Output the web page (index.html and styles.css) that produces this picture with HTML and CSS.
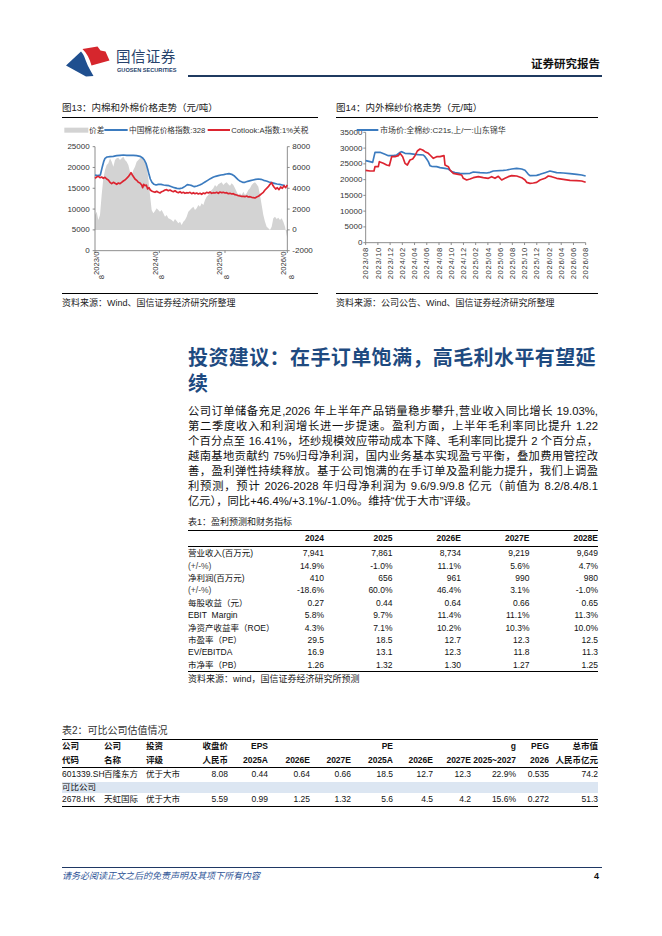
FILE: index.html
```html
<!DOCTYPE html>
<html lang="zh-CN">
<head>
<meta charset="utf-8">
<title>证券研究报告</title>
<link rel="stylesheet" href="styles.css">
</head>
<body>
<div class="page">
  <header class="hdr">
    <div class="logo">
      <svg class="logo-mark" width="48" height="31" viewBox="64 46 48 31">
        <path fill="#1f4f8f" d="M66,65.5 L81,51.5 C84.5,55 85.5,61 88,66 C89.8,69.5 91.5,72.5 93.5,76 L86,76.5 Z"/>
        <path fill="#d6262d" d="M82.5,49 L97.5,46.5 L100.5,50.5 L105.5,51.5 L109.5,60.5 L91.5,65.5 C89.5,58.5 87,53.5 82.5,49 Z"/>
      </svg>
      <div class="logo-text">
        <div class="logo-cn">国信证券</div>
        <div class="logo-en">GUOSEN SECURITIES</div>
      </div>
    </div>
    <div class="hdr-right"><span class="hdr-title">证券研究报告</span></div>
  </header>

  <div class="figs">
    <figure class="fig fig-a">
      <div class="fig-cap">图13：内棉和外棉价格走势（元/吨）</div>
      <svg class="chart" width="256" height="175" viewBox="21 69 768 525">
        <polygon class="area" points="120,405 120,360 125,350 130,375 135,360 140,300 145,250 150,225 155,210 160,205 165,190 170,200 175,215 180,195 185,190 190,188 195,195 200,190 205,185 210,195 215,200 220,210 225,230 230,240 235,225 240,215 245,200 250,195 255,190 260,188 265,192 270,200 275,215 280,250 285,300 290,345 295,355 300,348 305,340 310,345 315,350 320,345 325,355 330,365 335,360 340,370 345,372 350,375 355,380 360,372 365,378 370,385 375,380 380,390 385,380 390,375 395,365 400,350 405,345 410,340 415,335 420,345 425,340 430,330 435,335 440,325 445,330 450,315 455,305 460,300 465,290 470,285 475,280 480,270 485,275 490,268 495,265 500,262 505,270 510,265 515,262 520,268 525,272 530,265 535,270 540,280 545,290 550,300 555,295 560,300 565,290 570,300 575,295 580,285 585,280 590,270 595,265 600,262 605,268 610,275 615,300 620,330 625,360 630,380 635,395 640,400 645,405 650,395 655,370 660,365 665,372 670,368 675,375 680,370 685,380 690,395 695,420 697,430 697,405"/>
        <g class="axis">
          <line x1="120" y1="155" x2="120" y2="467"/>
          <line x1="697" y1="155" x2="697" y2="467"/>
          <line x1="120" y1="467" x2="697" y2="467"/>
          <line x1="113" y1="155" x2="120" y2="155"/><line x1="113" y1="217.4" x2="120" y2="217.4"/><line x1="113" y1="279.8" x2="120" y2="279.8"/><line x1="113" y1="342.2" x2="120" y2="342.2"/><line x1="113" y1="404.6" x2="120" y2="404.6"/><line x1="113" y1="467" x2="120" y2="467"/>
          <line x1="697" y1="155" x2="704" y2="155"/><line x1="697" y1="217.4" x2="704" y2="217.4"/><line x1="697" y1="279.8" x2="704" y2="279.8"/><line x1="697" y1="342.2" x2="704" y2="342.2"/><line x1="697" y1="404.6" x2="704" y2="404.6"/><line x1="697" y1="467" x2="704" y2="467"/>
          <line x1="120" y1="467" x2="120" y2="474"/><line x1="313" y1="467" x2="313" y2="474"/><line x1="510" y1="467" x2="510" y2="474"/><line x1="697" y1="467" x2="697" y2="474"/>
        </g>
        <polyline class="ln-blue" points="120,240 128,242 136,240 142,215 146,200 150,190 156,186 165,185 175,184 185,182 195,181 205,180 215,181 225,181 235,181 245,182 255,184 262,188 268,195 273,205 278,222 282,238 286,252 291,262 297,268 303,270 310,268 318,268 326,270 334,271 342,272 350,275 358,278 366,280 374,281 382,279 390,274 397,269 404,270 411,272 418,275 426,273 434,270 442,266 450,261 458,256 466,251 474,247 482,244 490,242 498,240 506,239 514,237 522,236 530,238 537,242 543,248 549,254 556,259 563,262 570,262 578,259 586,257 594,255 602,253 610,252 618,253 626,256 634,258 642,261 650,263 658,265 666,267 674,268 682,270 690,272"/>
        <polyline class="ln-red" points="120,250 125,246 130,244 135,248 140,246 145,250 150,247 155,252 160,255 165,262 170,266 175,262 180,265 185,268 190,264 195,266 200,262 205,258 210,255 215,250 220,245 225,238 228,233 232,240 236,246 240,252 245,256 250,262 255,264 260,270 263,278 266,268 270,272 274,270 278,282 282,278 286,285 290,288 295,290 300,292 305,289 310,292 315,294 320,290 325,288 330,285 335,284 340,287 345,285 350,288 355,290 360,287 365,291 370,293 375,290 380,294 385,292 390,295 395,293 400,294 405,292 410,296 415,293 420,296 425,294 430,297 435,295 440,298 445,294 450,296 455,292 460,294 465,291 470,295 475,293 480,294 485,292 490,295 495,291 500,293 505,292 510,294 515,293 520,296 525,295 530,297 535,296 540,299 545,300 550,302 555,303 560,304 565,304 570,305 575,303 580,306 585,305 590,307 595,308 600,309 605,306 610,304 615,300 620,296 625,292 630,285 635,280 640,275 645,268 650,263 653,270 657,276 662,282 667,278 672,284 677,276 682,280 687,272 692,278 697,270"/>
        <g class="ylab">
          <text x="104" y="155">25000</text><text x="104" y="217.4">20000</text><text x="104" y="279.8">15000</text><text x="104" y="342.2">10000</text><text x="104" y="404.6">5000</text><text x="104" y="467">0</text>
        </g>
        <g class="ylab-r">
          <text x="712" y="155">8000</text><text x="712" y="217.4">6000</text><text x="712" y="279.8">4000</text><text x="712" y="342.2">2000</text><text x="712" y="404.6">0</text><text x="712" y="467">-2000</text>
        </g>
        <g class="xlab">
          <text transform="translate(133,540) rotate(-90)">2023/0</text><text transform="translate(148,553) rotate(-90)">8</text>
          <text transform="translate(308,540) rotate(-90)">2024/0</text><text transform="translate(326,553) rotate(-90)">8</text>
          <text transform="translate(500,540) rotate(-90)">2025/0</text><text transform="translate(523,553) rotate(-90)">8</text>
          <text transform="translate(693,540) rotate(-90)">2026/0</text><text transform="translate(718,553) rotate(-90)">8</text>
        </g>
        <g class="legend">
          <rect x="28" y="98" width="72" height="15" fill="#d3d3d3"/>
          <text x="102" y="105">价差</text>
          <line class="ln-blue" x1="148" y1="105" x2="218" y2="105"/>
          <text x="222" y="105">中国棉花价格指数:328</text>
          <line class="ln-red" x1="458" y1="105" x2="525" y2="105"/>
          <text x="529" y="105">Cotlook:A指数:1%关税</text>
        </g>
      </svg>
      <div class="fig-src">资料来源：Wind、国信证券经济研究所整理</div>
    </figure>

    <figure class="fig fig-b">
      <div class="fig-cap">图14：内外棉纱价格走势（元/吨）</div>
      <svg class="chart" width="262" height="175" viewBox="18 69 786 525">
        <g class="axis">
          <line x1="107" y1="112" x2="107" y2="443"/>
          <line x1="107" y1="443" x2="767" y2="443"/>
          <line x1="100" y1="112" x2="107" y2="112"/><line x1="100" y1="159.3" x2="107" y2="159.3"/><line x1="100" y1="206.6" x2="107" y2="206.6"/><line x1="100" y1="253.9" x2="107" y2="253.9"/><line x1="100" y1="301.1" x2="107" y2="301.1"/><line x1="100" y1="348.4" x2="107" y2="348.4"/><line x1="100" y1="395.7" x2="107" y2="395.7"/><line x1="100" y1="443" x2="107" y2="443"/>
          <line x1="107" y1="443" x2="107" y2="450"/><line x1="143.67" y1="443" x2="143.67" y2="450"/><line x1="180.33" y1="443" x2="180.33" y2="450"/><line x1="217" y1="443" x2="217" y2="450"/><line x1="253.67" y1="443" x2="253.67" y2="450"/><line x1="290.33" y1="443" x2="290.33" y2="450"/><line x1="327" y1="443" x2="327" y2="450"/><line x1="363.67" y1="443" x2="363.67" y2="450"/><line x1="400.33" y1="443" x2="400.33" y2="450"/><line x1="437" y1="443" x2="437" y2="450"/><line x1="473.67" y1="443" x2="473.67" y2="450"/><line x1="510.33" y1="443" x2="510.33" y2="450"/><line x1="547" y1="443" x2="547" y2="450"/><line x1="583.67" y1="443" x2="583.67" y2="450"/><line x1="620.33" y1="443" x2="620.33" y2="450"/><line x1="657" y1="443" x2="657" y2="450"/><line x1="693.67" y1="443" x2="693.67" y2="450"/><line x1="730.33" y1="443" x2="730.33" y2="450"/><line x1="767" y1="443" x2="767" y2="450"/>
        </g>
        <g class="ylab">
          <text x="97" y="112">35000</text><text x="97" y="159.3">30000</text><text x="97" y="206.6">25000</text><text x="97" y="253.9">20000</text><text x="97" y="301.1">15000</text><text x="97" y="348.4">10000</text><text x="97" y="395.7">5000</text><text x="97" y="443">0</text>
        </g>
        <polyline class="ln-blue" points="107,197 120,200 128,202 135,172 150,172 165,178 175,182 190,182 200,180 210,172 215,170 225,175 240,176 255,178 265,179 280,180 285,185 290,192 295,200 300,212 305,214 320,215 330,218 345,220 355,222 365,230 375,233 390,235 400,236 420,235 430,231 450,233 470,234 480,232 490,228 520,226 530,225 545,222 560,220 575,222 585,226 595,238 600,242 620,241 630,238 645,233 660,228 680,233 700,234 720,236 740,238 755,240 767,243"/>
        <polyline class="ln-red" points="107,226 120,228 132,228 135,215 145,215 148,200 160,205 170,210 178,212 185,185 195,185 205,182 210,175 218,185 225,205 232,210 240,195 248,192 255,182 262,168 270,162 278,165 285,170 295,175 300,180 310,190 320,185 330,185 342,182 345,210 355,215 360,225 370,235 385,238 395,240 400,250 410,255 420,252 430,248 445,245 460,248 475,250 485,245 495,250 505,244 515,255 525,250 535,245 545,242 560,243 575,248 585,255 590,262 600,265 610,264 620,262 630,255 645,250 655,243 665,245 680,250 700,253 720,256 740,257 755,258 767,262"/>
        <g class="xlab2">
          <text transform="translate(115,456) rotate(-90)">2023/08</text>
          <text transform="translate(151.67,456) rotate(-90)">2023/10</text>
          <text transform="translate(188.33,456) rotate(-90)">2023/12</text>
          <text transform="translate(225,456) rotate(-90)">2024/02</text>
          <text transform="translate(261.67,456) rotate(-90)">2024/04</text>
          <text transform="translate(298.33,456) rotate(-90)">2024/06</text>
          <text transform="translate(335,456) rotate(-90)">2024/08</text>
          <text transform="translate(371.67,456) rotate(-90)">2024/10</text>
          <text transform="translate(408.33,456) rotate(-90)">2024/12</text>
          <text transform="translate(445,456) rotate(-90)">2025/02</text>
          <text transform="translate(481.67,456) rotate(-90)">2025/04</text>
          <text transform="translate(518.33,456) rotate(-90)">2025/06</text>
          <text transform="translate(555,456) rotate(-90)">2025/08</text>
          <text transform="translate(591.67,456) rotate(-90)">2025/10</text>
          <text transform="translate(628.33,456) rotate(-90)">2025/12</text>
          <text transform="translate(665,456) rotate(-90)">2026/02</text>
          <text transform="translate(701.67,456) rotate(-90)">2026/04</text>
          <text transform="translate(738.33,456) rotate(-90)">2026/06</text>
          <text transform="translate(775,456) rotate(-90)">2026/08</text>
        </g>
        <g class="legend legend-b">
          <line class="ln-blue" x1="80" y1="105" x2="145" y2="105"/>
          <text x="150" y="105">市场价:全棉纱:C21s,上/一:山东锦华</text>
        </g>
      </svg>
      <div class="fig-src">资料来源：公司公告、Wind、国信证券经济研究所整理</div>
    </figure>
  </div>

  <section class="main">
    <h2 class="h2">投资建议：在手订单饱满，高毛利水平有望延续</h2>
    <p class="para">
      <span class="ln">公司订单储备充足,2026 年上半年产品销量稳步攀升,营业收入同比增长 19.03%,</span>
      <span class="ln">第二季度收入和利润增长进一步提速。盈利方面，上半年毛利率同比提升 1.22</span>
      <span class="ln">个百分点至 16.41%，坯纱规模效应带动成本下降、毛利率同比提升 2 个百分点，</span>
      <span class="ln">越南基地贡献约 75%归母净利润，国内业务基本实现盈亏平衡，叠加费用管控改</span>
      <span class="ln">善，盈利弹性持续释放。基于公司饱满的在手订单及盈利能力提升，我们上调盈</span>
      <span class="ln">利预测，预计 2026-2028 年归母净利润为 9.6/9.9/9.8 亿元（前值为 8.2/8.4/8.1</span>
      <span class="ln ln-last">亿元），同比+46.4%/+3.1%/-1.0%。维持“优于大市”评级。</span>
    </p>
    <div class="tcap">表1：盈利预测和财务指标</div>
    <div class="t1">
      <div class="t1-row t1-head"><span class="lbl"></span><span>2024</span><span>2025</span><span>2026E</span><span>2027E</span><span>2028E</span></div>
      <div class="t1-row"><span class="lbl">营业收入(百万元)</span><span>7,941</span><span>7,861</span><span>8,734</span><span>9,219</span><span>9,649</span></div>
      <div class="t1-row"><span class="lbl sub">(+/-%)</span><span>14.9%</span><span>-1.0%</span><span>11.1%</span><span>5.6%</span><span>4.7%</span></div>
      <div class="t1-row"><span class="lbl">净利润(百万元)</span><span>410</span><span>656</span><span>961</span><span>990</span><span>980</span></div>
      <div class="t1-row"><span class="lbl sub">(+/-%)</span><span>-18.6%</span><span>60.0%</span><span>46.4%</span><span>3.1%</span><span>-1.0%</span></div>
      <div class="t1-row"><span class="lbl">每股收益（元）</span><span>0.27</span><span>0.44</span><span>0.64</span><span>0.66</span><span>0.65</span></div>
      <div class="t1-row"><span class="lbl">EBIT&nbsp;&nbsp;Margin</span><span>5.8%</span><span>9.7%</span><span>11.4%</span><span>11.1%</span><span>11.3%</span></div>
      <div class="t1-row"><span class="lbl">净资产收益率（ROE）</span><span>4.3%</span><span>7.1%</span><span>10.2%</span><span>10.3%</span><span>10.0%</span></div>
      <div class="t1-row"><span class="lbl">市盈率（PE）</span><span>29.5</span><span>18.5</span><span>12.7</span><span>12.3</span><span>12.5</span></div>
      <div class="t1-row"><span class="lbl">EV/EBITDA</span><span>16.9</span><span>13.1</span><span>12.3</span><span>11.8</span><span>11.3</span></div>
      <div class="t1-row"><span class="lbl">市净率（PB）</span><span>1.26</span><span>1.32</span><span>1.30</span><span>1.27</span><span>1.25</span></div>
    </div>
    <div class="tsrc">资料来源：wind，国信证券经济研究所预测</div>
  </section>

  <div class="tcap2">表2：可比公司估值情况</div>
  <div class="t2">
    <div class="t2-row t2-head"><span class="l">公司</span><span class="l">公司</span><span class="l">投资</span><span>收盘价</span><span>EPS</span><span></span><span></span><span>PE</span><span></span><span></span><span>g</span><span>PEG</span><span>总市值</span></div>
    <div class="t2-row t2-head t2-head2"><span class="l">代码</span><span class="l">名称</span><span class="l">评级</span><span>人民币</span><span>2025A</span><span>2026E</span><span>2027E</span><span>2025A</span><span>2026E</span><span>2027E</span><span>2025~2027</span><span>2026</span><span>人民币亿元</span></div>
    <div class="t2-row t2-r1"><span class="l">601339.SH</span><span class="l">百隆东方</span><span class="l">优于大市</span><span>8.08</span><span>0.44</span><span>0.64</span><span>0.66</span><span>18.5</span><span>12.7</span><span>12.3</span><span>22.9%</span><span>0.535</span><span>74.2</span></div>
    <div class="t2-row t2-group"><span class="l span-all">可比公司</span></div>
    <div class="t2-row t2-r2"><span class="l">2678.HK</span><span class="l">天虹国际</span><span class="l">优于大市</span><span>5.59</span><span>0.99</span><span>1.25</span><span>1.32</span><span>5.6</span><span>4.5</span><span>4.2</span><span>15.6%</span><span>0.272</span><span>51.3</span></div>
  </div>

  <footer class="ftr">
    <span class="ftr-note">请务必阅读正文之后的免责声明及其项下所有内容</span>
    <span class="ftr-num">4</span>
  </footer>
</div>
</body>
</html>
```

FILE: styles.css
```css
* { box-sizing: border-box; }
html, body { margin: 0; padding: 0; background: #fff; }
body {
  font-family: "Liberation Sans", "Noto Sans CJK SC", sans-serif;
  color: #111;
}
.page {
  width: 662px;
  padding: 46px 60px 0 62px;
}

/* header */
.hdr { display: flex; align-items: flex-end; height: 31px; }
.logo { display: flex; align-items: flex-start; height: 31px; }
.logo-mark { display: block; margin-left: 2px; }
.logo-text { margin-left: 4px; margin-top: 2px; }
.logo-cn {
  font-family: "Noto Sans CJK SC", sans-serif;
  font-size: 14.5px; line-height: 16px; color: #27426b; letter-spacing: 0.4px;
}
.logo-en {
  margin-top: 3px;
  font-size: 5.6px; line-height: 7px; font-weight: bold; color: #27426b; margin-left: 1px;
}
.hdr-right {
  flex: 1; margin-left: 12px;
  border-bottom: 2px solid #1f3a60;
  padding-bottom: 5px; text-align: right;
}
.hdr-title {
  display: block; margin-right: 2px;
  font-family: "Noto Sans CJK SC", sans-serif;
  font-weight: bold; font-size: 11.5px; line-height: 14px; color: #111;
}

/* figures */
.figs { display: flex; gap: 18px; margin-top: 25px; }
.fig { margin: 0; }
.fig-a { width: 256px; }
.fig-b { width: 262px; }
.fig-cap {
  font-size: 9.5px; line-height: 12px; padding-bottom: 3px;
  border-bottom: 1px solid #000; color: #222;
}
.fig-src {
  border-top: 1px solid #000; font-size: 9px; line-height: 12px;
  padding-top: 3px; color: #222;
}
.chart { display: block; }
.chart text { font-family: "Liberation Sans", "Noto Sans CJK SC", sans-serif; fill: #333; }
.area { fill: #d3d3d3; }
.axis line { stroke: #777; stroke-width: 2.5; }
.ln-blue { fill: none; stroke: #3b7bbf; stroke-width: 5; stroke-linejoin: round; }
.ln-red { fill: none; stroke: #dc2430; stroke-width: 5; stroke-linejoin: round; }
.legend line { stroke-width: 6; }
.ylab text { font-size: 24px; text-anchor: end; dominant-baseline: central; }
.ylab-r text { font-size: 24px; text-anchor: start; dominant-baseline: central; }
.xlab text { font-size: 23px; text-anchor: start; }
.xlab2 text { font-size: 23px; text-anchor: end; letter-spacing: 2px; }
.legend text { font-size: 23px; dominant-baseline: central; }
.legend-b text { font-size: 24px; }

/* main section */
.main { margin-left: 126px; width: 410px; }
.h2 {
  margin: 35.25px 0 0;
  font-family: "Noto Sans CJK SC", sans-serif;
  font-size: 20px; line-height: 25.5px; font-weight: bold;
  color: #1e4a80; letter-spacing: 0.4px;
}
.para { margin: 8.25px 0 0; font-size: 11.3px; line-height: 15px; color: #111; }
.ln { display: block; text-align: justify; text-align-last: justify; }
.ln-last { text-align-last: left; }

.tcap { margin-top: 7.2px; font-size: 9px; line-height: 12px; color: #222; }
.t1 {
  margin-top: 2.8px;
  border-top: 1px solid #000; border-bottom: 1px solid #000;
}
.t1-row {
  display: grid;
  grid-template-columns: 67.5px repeat(5, 68.5px);
  height: 12.4px; align-items: center;
  font-size: 8.5px; line-height: 11px; color: #111;
}
.t1-row span { text-align: right; white-space: nowrap; }
.t1-row .lbl { text-align: left; }
.t1-row .sub { color: #444; }
.t1-head { height: 16px; font-weight: bold; border-bottom: 1px solid #000; }
.tsrc { margin-top: 0.5px; font-size: 9px; line-height: 12px; color: #222; }

/* table 2 */
.tcap2 { margin-top: 39.5px; font-size: 10px; line-height: 13px; color: #333; margin-bottom: 1.5px; }
.t2 { width: 536px; border-top: 1px solid #000; border-bottom: 1px solid #000; }
.t2-row {
  display: grid;
  grid-template-columns: 42px 42px 40px 42px 40px 42px 41px 42px 40px 38px 45px 33px 49px;
  height: 13.5px; align-items: center;
  font-size: 8.5px; line-height: 11px; color: #111;
}
.t2-row span { text-align: right; white-space: nowrap; }
.t2-row .l { text-align: left; }
.t2-head { font-weight: bold; }
.t2-head2 { height: 14.5px; border-bottom: 1px solid #000; }
.t2-r1 { height: 14px; }
.t2-group { height: 11px; background: #dce6f2; }
.t2-group .span-all { grid-column: 1 / -1; }
.t2-r2 { height: 13px; }

/* footer */
.ftr {
  margin-top: 60px; border-top: 1px solid #1f3864;
  display: flex; justify-content: space-between; padding-top: 2px;
}
.ftr-note {
  font-family: "Noto Sans CJK SC", sans-serif;
  font-style: italic; color: #2f5597; font-size: 9px; line-height: 12px;
}
.ftr-num { font-weight: bold; font-size: 9px; line-height: 12px; margin-right: 3px; }
```
